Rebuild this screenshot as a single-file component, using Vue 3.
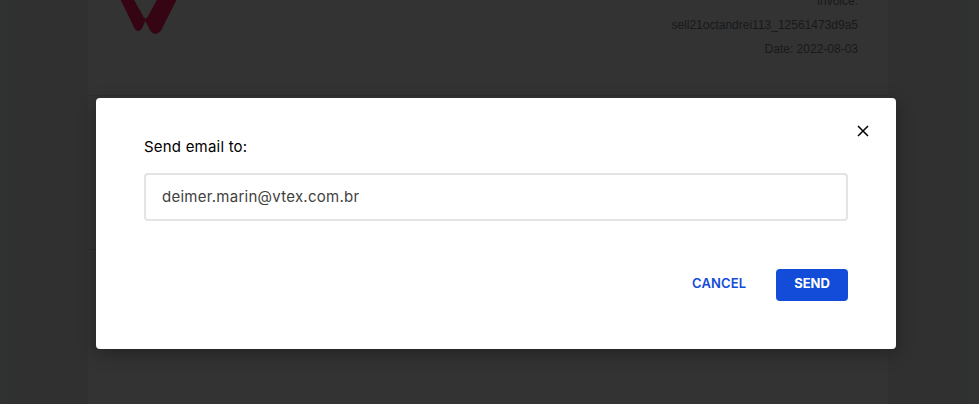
<script setup>
import { ref } from 'vue'

const email = ref('deimer.marin@vtex.com.br')
</script>

<template>
  <div class="page">
    <main class="paper">
      <header class="invoice-head">
        <svg class="brand" width="66" height="36" viewBox="0 0 66 36">
          <path d="M-3.2-10 L15.6 28.4 Q19.2 33.5 22.8 28.4 L26.5 21 L31.3 30.8 Q35.9 37 41.8 31 L62.5-10 L43.3-10 L28.4 17.3 Q26.5 19.6 24.7 17.3 L9.5-10 Z" />
        </svg>
        <div class="meta">
          <span>Invoice:</span>
          <span>sell21octandrei113_12561473d9a5</span>
          <span>Date: 2022-08-03</span>
        </div>
      </header>
      <section class="details"></section>
      <section class="items"></section>
    </main>

    <div class="overlay">
      <form class="modal" @submit.prevent>
        <button class="close" type="button" aria-label="Close">
          <svg width="12" height="12" viewBox="0 0 12 12"><path d="M1 1 L11 11 M11 1 L1 11" /></svg>
        </button>
        <label class="label" for="email">Send email to:</label>
        <input id="email" v-model="email" class="field" type="text" />
        <div class="actions">
          <button class="cancel" type="button">CANCEL</button>
          <button class="send" type="submit">SEND</button>
        </div>
      </form>
    </div>
  </div>
</template>

<style>
body {
  margin: 0;
  overflow: hidden;
}
</style>

<style scoped>
.page {
  position: relative;
  box-sizing: border-box;
  height: 404px;
  padding: 0 91px 0 88px;
  overflow: hidden;
  background: #303030;
}
.page::before {
  content: '';
  position: absolute;
  inset: 0;
  border: solid #2f3231;
  border-width: 0 11px 0 8px;
}
.paper {
  height: 404px;
  background: #333;
}
.invoice-head {
  box-sizing: border-box;
  display: flex;
  justify-content: space-between;
  height: 96px;
  padding: 0 30px 0 31px;
  border-bottom: 1px solid #2f2f2f;
}
.brand path {
  fill: #350514;
}
.meta {
  display: flex;
  flex-direction: column;
  align-items: flex-end;
  margin-top: -11px;
  font: 12px/24px 'Liberation Sans', Arial, sans-serif;
  color: #17191c;
}
.details {
  box-sizing: border-box;
  height: 154px;
  border-bottom: 1px solid #2c2c2c;
}
.overlay {
  position: absolute;
  inset: 0;
  display: flex;
  align-items: flex-start;
  padding: 98px 83px 0 96px;
}
.modal {
  position: relative;
  box-sizing: border-box;
  width: 800px;
  height: 251px;
  padding: 37px 48px 0;
  display: flex;
  flex-direction: column;
  background: #fff;
  border-radius: 4px;
  box-shadow: 0 5px 18px rgba(0, 0, 0, 0.3);
  font-family: Inter, 'Liberation Sans', sans-serif;
}
button {
  margin: 0;
  padding: 0;
  border: 0;
  background: none;
  font: 600 13px/28px Inter, 'Liberation Sans', sans-serif;
}
.close {
  position: absolute;
  top: 27px;
  right: 27px;
  width: 12px;
  height: 12px;
}
.close svg {
  display: block;
}
.close path {
  fill: none;
  stroke: #000;
  stroke-width: 1.5;
}
.label {
  font-size: 15px;
  line-height: 24px;
  letter-spacing: 0.2px;
  color: #000;
}
.field {
  box-sizing: border-box;
  width: 704px;
  height: 48px;
  margin: 14px 0 0;
  padding: 0 16px 2px;
  border: 2px solid #e3e4e6;
  border-radius: 4px;
  outline: 0;
  font: 15px Inter, 'Liberation Sans', sans-serif;
  letter-spacing: 0.26px;
  color: #3f3f40;
}
.actions {
  display: flex;
  justify-content: flex-end;
  gap: 30px;
  margin-top: 48px;
}
.cancel {
  width: 54px;
  padding-bottom: 4px;
  color: #134cd8;
  letter-spacing: 0.15px;
  white-space: nowrap;
}
.send {
  width: 72px;
  height: 32px;
  padding-bottom: 4px;
  border-radius: 4px;
  background: #134cd8;
  color: #fff;
  font-weight: 700;
}
</style>
